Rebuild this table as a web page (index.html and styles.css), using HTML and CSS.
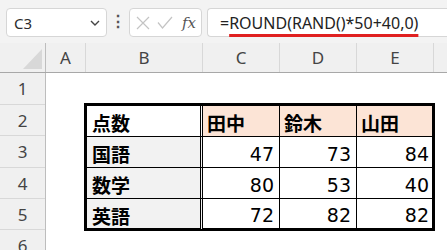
FILE: index.html
```html
<!DOCTYPE html>
<html lang="ja">
<head>
    <meta charset="UTF-8">
    <meta name="viewport" content="width=device-width, initial-scale=1.0">
    <title>点数</title>
    <link rel="stylesheet" href="styles.css">
</head>
<body>
    <div class="toolbar">
        <div class="namebox">
            <span>C3</span>
            <svg class="chevron" width="10" height="6" viewBox="0 0 10 6"><path d="M1 1 L5 5 L9 1" fill="none" stroke="#444" stroke-width="1.4"/></svg>
        </div>
        <div class="dots">⋮</div>
        <div class="fxbox">
            <svg width="14" height="14" viewBox="0 0 14 14"><path d="M1 1 L13 13 M13 1 L1 13" stroke="#c4c4c4" stroke-width="1.2"/></svg>
            <svg width="16" height="13" viewBox="0 0 16 13"><path d="M1 6.5 L5.5 12 L15 1" fill="none" stroke="#c4c4c4" stroke-width="1.2"/></svg>
            <span class="fx">fx</span>
        </div>
        <div class="formula">
            <span>=</span><span class="mark">ROUND(RAND()*50+40,0)</span>
        </div>
    </div>

    <div class="sheet">
        <div class="colheads">
            <div class="corner"><div class="tri"></div></div>
            <div class="colhead col-a">A</div>
            <div class="colhead col-b">B</div>
            <div class="colhead col-c">C</div>
            <div class="colhead col-d">D</div>
            <div class="colhead col-e">E</div>
            <div class="colhead col-f"></div>
        </div>
        <div class="body">
            <div class="rowheads">
                <div class="rowhead r1">1</div>
                <div class="rowhead r2">2</div>
                <div class="rowhead r3">3</div>
                <div class="rowhead r4">4</div>
                <div class="rowhead r5">5</div>
                <div class="rowhead r6">6</div>
            </div>
            <div class="cells">
                <div class="blank"></div>
                <div class="scores">
                    <div class="cell label r2">点数</div>
                    <div class="cell name c r2">田中</div>
                    <div class="cell name d r2">鈴木</div>
                    <div class="cell name e r2">山田</div>

                    <div class="cell label subj r3">国語</div>
                    <div class="cell num c r3">47</div>
                    <div class="cell num d r3">73</div>
                    <div class="cell num e r3">84</div>

                    <div class="cell label subj r4">数学</div>
                    <div class="cell num c r4">80</div>
                    <div class="cell num d r4">53</div>
                    <div class="cell num e r4">40</div>

                    <div class="cell label subj r5">英語</div>
                    <div class="cell num c r5">72</div>
                    <div class="cell num d r5">82</div>
                    <div class="cell num e r5">82</div>
                </div>
            </div>
        </div>
    </div>
</body>
</html>
```

FILE: styles.css
```css
body {
    margin: 0;
    width: 447px;
    height: 250px;
    overflow: hidden;
    background: #fff;
    font-family: "Noto Sans", "Open Sans", sans-serif;
}

/* formula bar */
.toolbar {
    height: 43px;
    box-sizing: border-box;
    padding: 8px 0 6px 6px;
    display: flex;
    align-items: stretch;
    background: #f3f3f3;
}
.namebox {
    width: 101px;
    box-sizing: border-box;
    background: #fff;
    border: 1px solid #d6d6d6;
    border-radius: 4px;
    display: flex;
    align-items: center;
    justify-content: space-between;
    padding: 0 6px 0 7px;
    font-size: 15px;
    color: #2c2c2c;
}
.chevron {
    margin-top: 1px;
}
.dots {
    width: 22px;
    text-align: center;
    font-size: 16px;
    line-height: 27px;
    color: #555;
    font-weight: bold;
}
.fxbox {
    width: 73px;
    box-sizing: border-box;
    background: #fff;
    border: 1px solid #d6d6d6;
    border-radius: 4px;
    display: flex;
    align-items: center;
    padding: 0 4px 0 6px;
    gap: 7px;
}
.fx {
    font-family: "DejaVu Serif", "Liberation Serif", serif;
    font-style: italic;
    font-size: 15px;
    color: #555;
    margin-left: 2px;
}
.formula {
    flex: 1;
    margin-left: 5px;
    background: #fff;
    border: 1px solid #d6d6d6;
    border-right: none;
    border-radius: 4px 0 0 4px;
    display: flex;
    align-items: center;
    padding-left: 12px;
    font-size: 16px;
    color: #222;
}
.mark {
    text-decoration: underline;
    text-decoration-color: #e02020;
    text-decoration-thickness: 3px;
    text-underline-offset: 5px;
}

/* sheet headers */
.colheads {
    display: flex;
    height: 30px;
    background: #f0f0f0;
    border-bottom: 1px solid #a8a8a8;
    box-sizing: border-box;
}
.corner {
    width: 46px;
    border-right: 1px solid #bdbdbd;
    box-sizing: border-box;
    position: relative;
}
.tri {
    position: absolute;
    right: 3px;
    bottom: 3px;
    width: 0;
    height: 0;
    border-left: 19px solid transparent;
    border-bottom: 20px solid #d8d8d8;
}
.colhead {
    box-sizing: border-box;
    border-right: 1px solid #d8d8d8;
    text-align: center;
    font-size: 17px;
    line-height: 29px;
    color: #444;
}
.col-a { width: 40px; }
.col-b { width: 117px; }
.col-c { width: 77px; }
.col-d { width: 77px; }
.col-e { width: 77px; }
.col-f { flex: 1; border-right: none; }

.body {
    display: flex;
}
.rowheads {
    width: 46px;
    flex: none;
    background: #f0f0f0;
    border-right: 1px solid #bdbdbd;
    box-sizing: border-box;
}
.rowhead {
    box-sizing: border-box;
    border-bottom: 1px solid #d8d8d8;
    text-align: center;
    font-size: 17px;
    color: #444;
    display: flex;
    align-items: center;
    justify-content: center;
}
.rowhead.r1 { height: 32px; }
.rowhead.r2 { height: 31px; }
.rowhead.r3 { height: 32px; }
.rowhead.r4 { height: 31px; }
.rowhead.r5 { height: 31px; }
.rowhead.r6 { height: 31px; border-bottom: none; }

/* data block B2:E5 */
.cells {
    flex: 1;
}
.blank {
    height: 30px;
}
.scores {
    margin-left: 38px;
    display: grid;
    grid-template-columns: 116px 77px 77px 78px;
    width: max-content;
    border-top: 3px solid #000;
    border-left: 3px solid #000;
}
.cell {
    box-sizing: border-box;
    border-right: 1px solid #000;
    border-bottom: 1px solid #000;
    display: flex;
    align-items: center;
    padding: 3px 4px 0 5px;
    color: #000;
}
.cell.r2 { height: 31px; }
.cell.r3 { height: 31px; }
.cell.r4 { height: 31px; }
.cell.r5 { height: 32px; border-bottom: 3px solid #000; }
.cell.e { border-right: 3px solid #000; }

.label {
    border-right: 3px double #000;
    font-family: "Noto Sans CJK JP", sans-serif;
    font-weight: bold;
    font-size: 19px;
}
.subj {
    background: #f2f2f2;
}
.name {
    background: #fce4d6;
    font-family: "Noto Sans CJK JP", sans-serif;
    font-weight: bold;
    font-size: 19px;
    padding-left: 4px;
}
.num {
    justify-content: flex-end;
    font-family: "DejaVu Sans", "Verdana", sans-serif;
    font-size: 19px;
    padding-right: 5px;
}
.num.e {
    padding-right: 3px;
}
```
